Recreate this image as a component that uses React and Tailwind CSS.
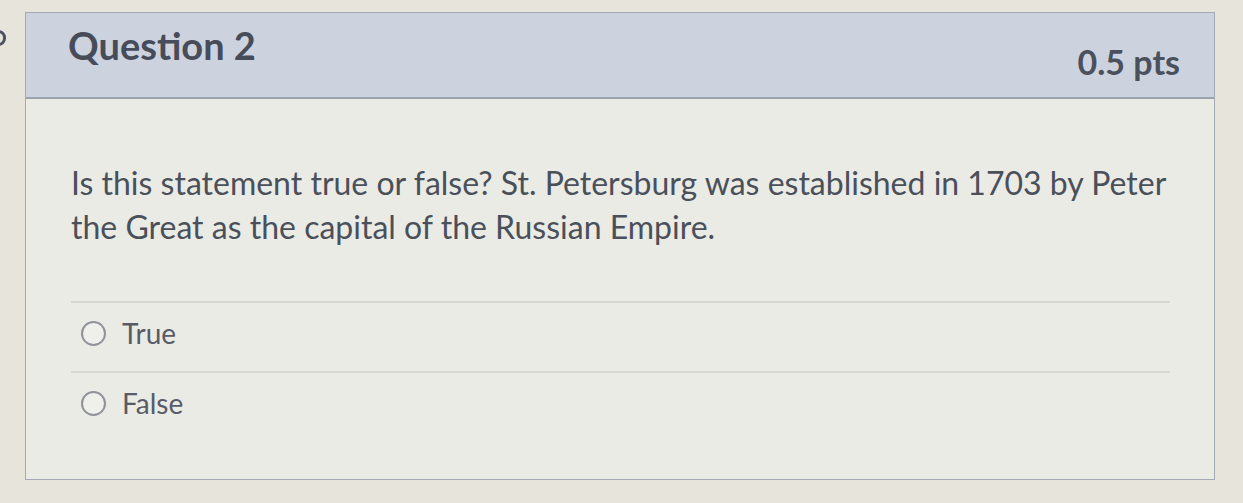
const options = ['True', 'False'];

const Radio = () => (
  <span className="block w-[25px] h-[25px] rounded-full border-2 border-[#8f9299] bg-[#efefeb]" />
);

export default function App() {
  return (
    <div
      className="relative w-[1243px] h-[503px] overflow-hidden bg-[#e7e4dc] text-[#474c57]"
      style={{ fontFamily: 'Lato, "Open Sans", sans-serif' }}
    >
      {/* previous question marker peeking in from the left */}
      <span className="absolute -left-[9px] top-[30px] w-[15px] h-[16px] rounded-full border-[3px] border-[#4d5260]" />

      <div className="ml-[25px] mt-[12px] w-[1190px] h-[468px] border border-[#a4a9b3] bg-[#ebebe6] flex flex-col">
        <div className="h-[86px] shrink-0 bg-[#ccd3df] border-b-2 border-[#9aa1af] flex items-start justify-between pl-[42px] pr-[34px]">
          <h2 className="mt-[10px] text-[38px] font-bold leading-[44px] text-[#464c59]">Question 2</h2>
          <span className="mt-[29px] text-[34px] font-bold leading-[40px] text-[#4a505c]">0.5 pts</span>
        </div>

        <div className="pl-[45px] pr-[38px]">
          <p className="mt-[62px] text-[32px] leading-[44px] text-[#4a505a]">
            Is this statement true or false? St. Petersburg was established in 1703 by Peter the Great as the capital of the Russian Empire.
          </p>

          <div className="mt-[52px] mr-[6px]">
            {options.map((opt) => (
              <div key={opt} className="h-[70px] pb-[8px] border-t-2 border-[#d7d7d2] flex items-center gap-[16px] pl-[10px]">
                <Radio />
                <span className="text-[28px] leading-none text-[#575c66]">{opt}</span>
              </div>
            ))}
          </div>
        </div>
      </div>
    </div>
  );
}
